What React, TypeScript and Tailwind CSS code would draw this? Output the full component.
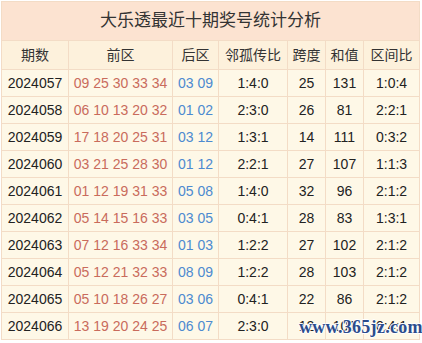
import React from "react";

const rows = [
  ["2024057", "09 25 30 33 34", "03 09", "1:4:0", "25", "131", "1:0:4"],
  ["2024058", "06 10 13 20 32", "01 02", "2:3:0", "26", "81", "2:2:1"],
  ["2024059", "17 18 20 25 31", "03 12", "1:3:1", "14", "111", "0:3:2"],
  ["2024060", "03 21 25 28 30", "01 12", "2:2:1", "27", "107", "1:1:3"],
  ["2024061", "01 12 19 31 33", "05 08", "1:4:0", "32", "96", "2:1:2"],
  ["2024062", "05 14 15 16 33", "03 05", "0:4:1", "28", "83", "1:3:1"],
  ["2024063", "07 12 16 33 34", "01 03", "1:2:2", "27", "102", "2:1:2"],
  ["2024064", "05 12 21 32 33", "08 09", "1:2:2", "28", "103", "2:1:2"],
  ["2024065", "05 10 18 26 27", "03 06", "0:4:1", "22", "86", "2:1:2"],
  ["2024066", "13 19 20 24 25", "06 07", "2:3:0", "12", "101", "0:4:1"],
];

const widths = ["w-[67px]", "w-[104px]", "w-[46px]", "w-[69px]", "w-[38px]", "w-[38px]", "w-[56px]"];
const headers = ["期数", "前区", "后区", "邻孤传比", "跨度", "和值", "区间比"];

export default function App() {
  return (
    <div
      className="relative w-[422px] h-[343px] bg-white"
      style={{ fontFamily: '"Liberation Sans", Arial, "Noto Sans CJK SC", sans-serif' }}
    >
      <table className="ml-[1px] mt-[1px] w-[419px] table-fixed border-collapse border border-[#f3dcc6] text-[14px] text-[#222]">
        <colgroup>
          {widths.map((w, i) => (
            <col key={i} className={w} />
          ))}
        </colgroup>
        <thead>
          <tr className="h-[39px] bg-[#fce3d1]">
            <th colSpan={7} className="border border-[#f3dcc6] text-[17px] font-normal text-[#333]">
              大乐透最近十期奖号统计分析
            </th>
          </tr>
          <tr className="h-[29px] bg-[#fdf1dc]">
            {headers.map((h, i) => (
              <th key={i} className="border border-[#f3dcc6] text-[14px] font-normal text-[#333]">
                {h}
              </th>
            ))}
          </tr>
        </thead>
        <tbody className="bg-[#fef8e7]">
          {rows.map((r, i) => (
            <tr key={i} className="h-[27px]">
              <td className="border border-[#f3dcc6] text-center">{r[0]}</td>
              <td className="border border-[#f3dcc6] text-center text-[#c96b5c]">{r[1]}</td>
              <td className="border border-[#f3dcc6] text-center text-[#4d8ad0]">{r[2]}</td>
              <td className="border border-[#f3dcc6] text-center">{r[3]}</td>
              <td className="border border-[#f3dcc6] text-center">{r[4]}</td>
              <td className="border border-[#f3dcc6] text-center">{r[5]}</td>
              <td className="border border-[#f3dcc6] text-center">{r[6]}</td>
            </tr>
          ))}
        </tbody>
      </table>
      <div
        className="absolute left-[299px] top-[313px] text-[18px] font-bold tracking-[0.3px] text-[#2c4c8c]"
        style={{
          fontFamily: '"Liberation Serif", serif',
          textShadow: "1px 0 0 #fff, -1px 0 0 #fff, 0 1px 0 #fff, 0 -1px 0 #fff",
        }}
      >
        www.365jz.com
      </div>
    </div>
  );
}
